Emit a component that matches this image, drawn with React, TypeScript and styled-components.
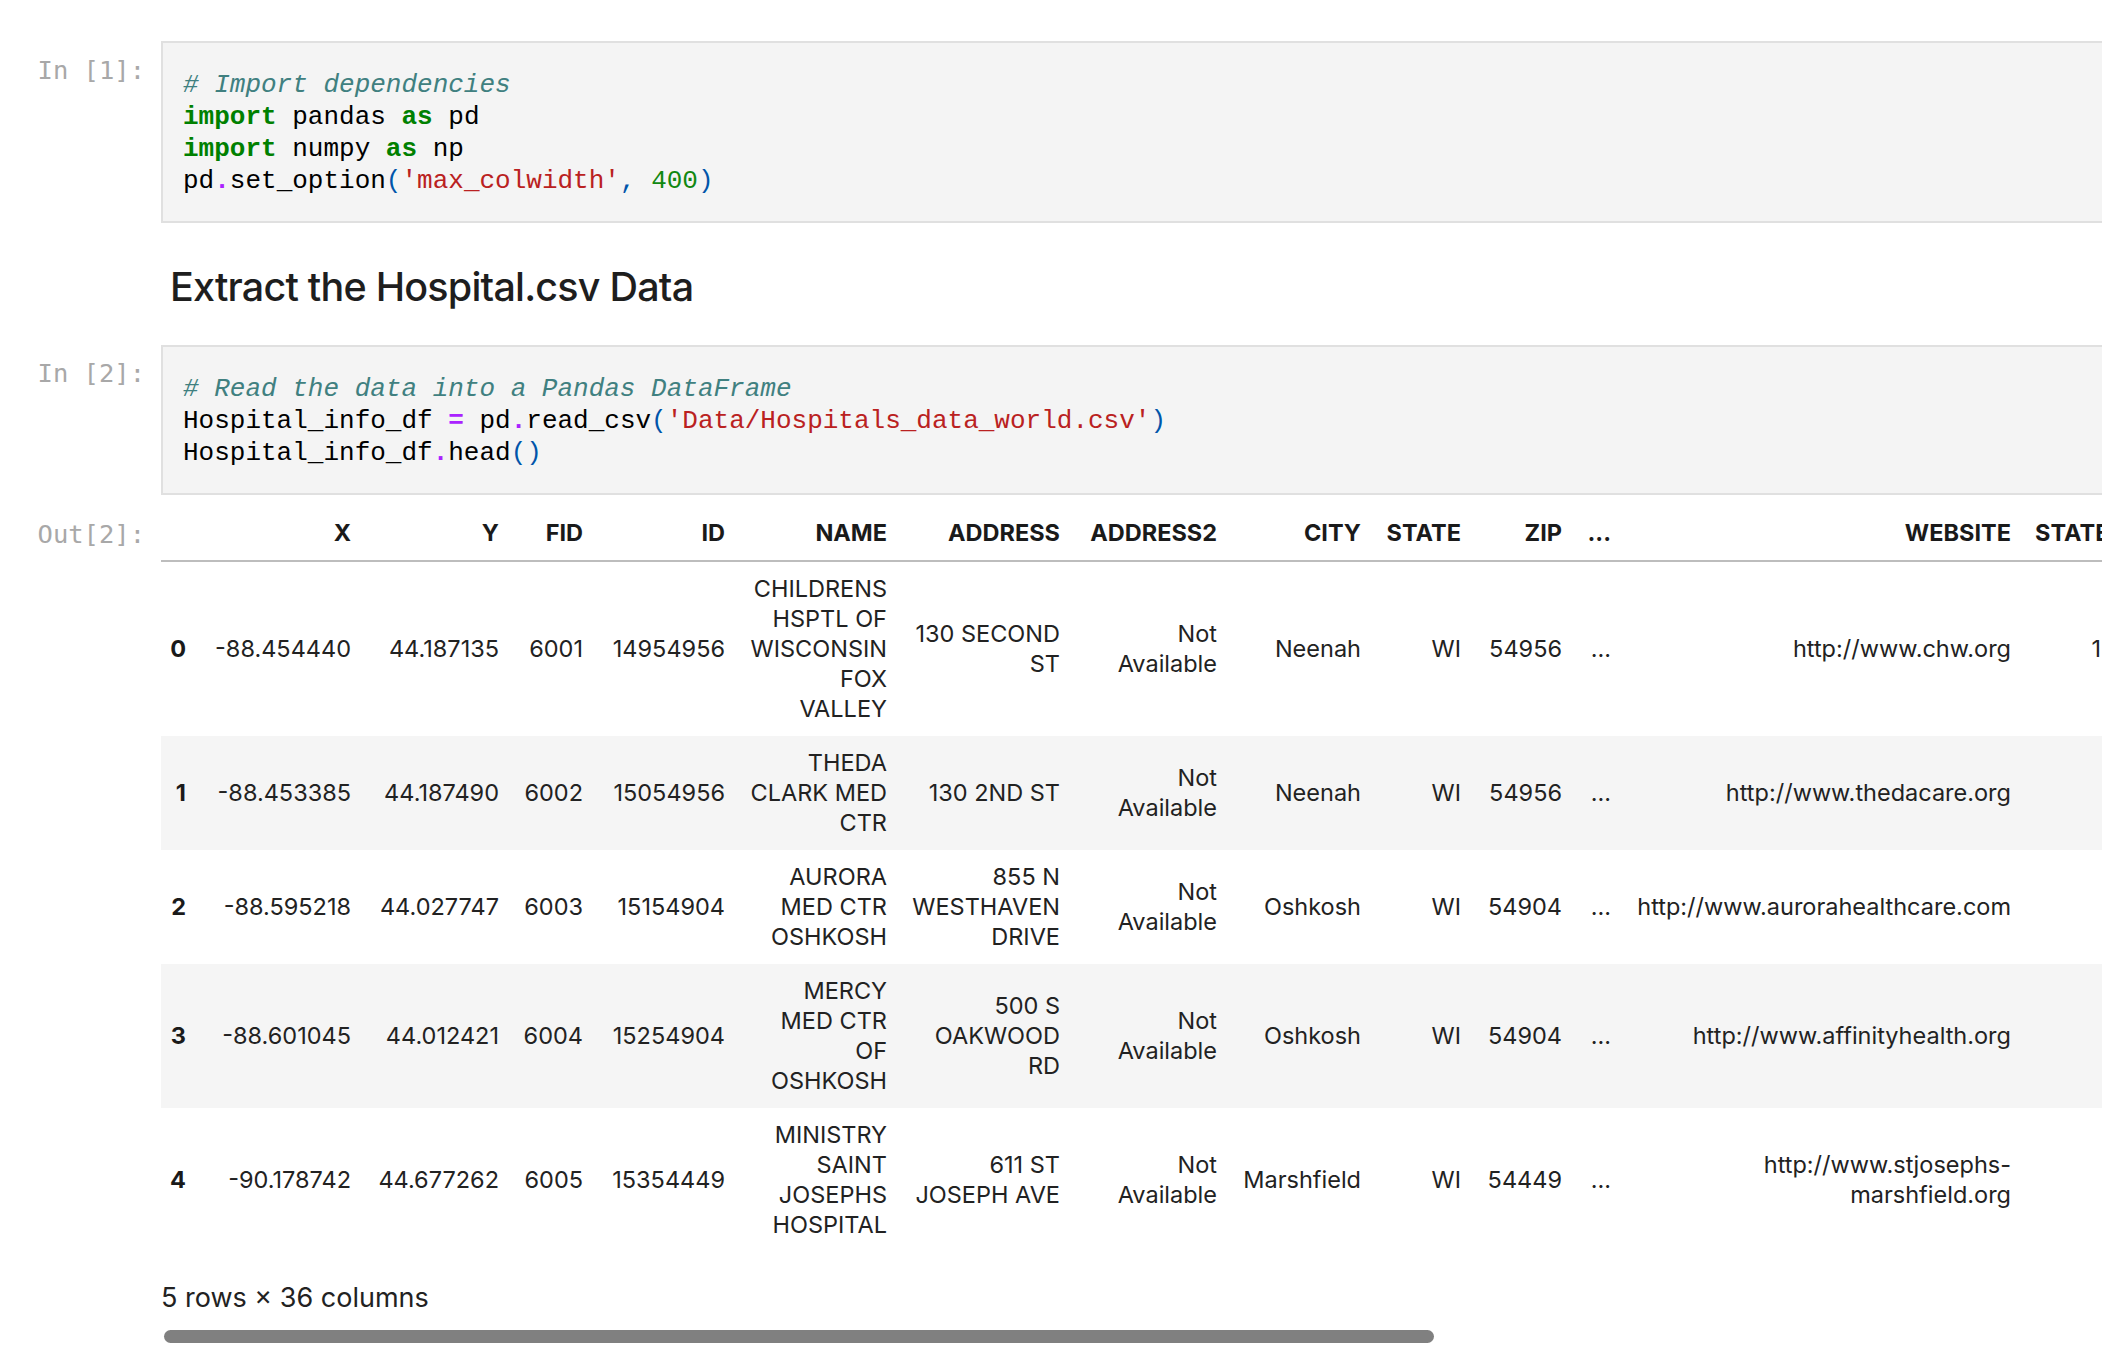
import React from "react";
import styled, { createGlobalStyle } from "styled-components";

const GlobalStyle = createGlobalStyle`
  html, body {
    margin: 0;
    padding: 0;
    background: #ffffff;
    overflow: hidden;
  }
  body {
    font-family: Inter, "Noto Sans", "Liberation Sans", sans-serif;
    color: #212121;
  }
`;

const Notebook = styled.div`
  width: 2300px;
  padding-top: 41px;
  display: flex;
  flex-direction: column;
`;

const Cell = styled.div<{ $gap?: number }>`
  display: flex;
  align-items: flex-start;
  margin-top: ${(p) => p.$gap ?? 0}px;
`;

const Prompt = styled.div<{ $top?: number }>`
  flex: 0 0 161px;
  box-sizing: border-box;
  padding-right: 16px;
  padding-top: ${(p) => p.$top ?? 13}px;
  text-align: right;
  font-family: "DejaVu Sans Mono", "Liberation Mono", monospace;
  font-size: 25.5px;
  line-height: 32px;
  color: #a8a8a8;
  white-space: pre;
`;

const InputArea = styled.div`
  flex: 1;
  min-width: 0;
  background: #f4f4f4;
  border: 2px solid #e0e0e0;
  border-right: none;
  padding: 26px 20px 24px 20px;
  font-family: "Liberation Mono", "DejaVu Sans Mono", monospace;
  font-size: 26px;
  line-height: 32px;
  color: #000;
`;

const CodeLine = styled.div`
  white-space: pre;
`;

type TokKind = "comment" | "kw" | "str" | "num" | "op" | "br" | "plain";

const tokColors: Record<TokKind, string> = {
  comment: "#408080",
  kw: "#008000",
  str: "#ba2121",
  num: "#118811",
  op: "#aa22ff",
  br: "#0055aa",
  plain: "#000000",
};

const Tok = styled.span<{ $k: TokKind }>`
  color: ${(p) => tokColors[p.$k]};
  font-style: ${(p) => (p.$k === "comment" ? "italic" : "normal")};
  font-weight: ${(p) => (p.$k === "kw" || p.$k === "op" ? 700 : 400)};
`;

const Markdown = styled.div`
  flex: 1;
  padding-left: 9px;
`;

const Heading = styled.h2`
  margin: 0;
  font-family: Inter, "Noto Sans", sans-serif;
  font-weight: 500;
  font-size: 39.5px;
  line-height: 48px;
  letter-spacing: -0.8px;
  color: #1e1e1e;
`;

const OutputArea = styled.div`
  flex: 1;
  min-width: 0;
  overflow: hidden;
  display: flex;
  flex-direction: column;
`;

const Table = styled.table`
  border-collapse: collapse;
  border-spacing: 0;
  table-layout: fixed;
  width: 2022px;
  font-family: Inter, "Noto Sans", "Liberation Sans", sans-serif;
  font-size: 23.5px;
  line-height: 30px;
  color: #222;
`;

const HeadRow = styled.tr`
  border-bottom: 2px solid #bdbdbd;
`;

const Th = styled.th`
  text-align: right;
  vertical-align: middle;
  padding: 12px 12px;
  font-weight: 700;
  white-space: nowrap;
  overflow: hidden;
  color: #1a1a1a;
`;

const BodyRow = styled.tr<{ $striped: boolean }>`
  background: ${(p) => (p.$striped ? "#f5f5f5" : "#ffffff")};
`;

const Td = styled.td`
  text-align: right;
  vertical-align: middle;
  padding: 12px 12px;
  white-space: nowrap;
  overflow: hidden;
`;

const IndexTh = styled(Th)`
  padding-left: 0;
`;

const Summary = styled.p`
  margin: 30px 0 0 0;
  font-size: 27px;
  line-height: 32px;
  color: #222;
`;

const ScrollTrack = styled.div`
  margin-top: 16px;
  padding-left: 3px;
  height: 13px;
`;

const ScrollThumb = styled.div`
  width: 1270px;
  height: 13px;
  border-radius: 7px;
  background: #808080;
`;

type Tk = [TokKind, string];

const cell1: Tk[][] = [
  [["comment", "# Import dependencies"]],
  [["kw", "import"], ["plain", " pandas "], ["kw", "as"], ["plain", " pd"]],
  [["kw", "import"], ["plain", " numpy "], ["kw", "as"], ["plain", " np"]],
  [
    ["plain", "pd"],
    ["op", "."],
    ["plain", "set_option"],
    ["br", "("],
    ["str", "'max_colwidth'"],
    ["br", ","],
    ["plain", " "],
    ["num", "400"],
    ["br", ")"],
  ],
];

const cell2: Tk[][] = [
  [["comment", "# Read the data into a Pandas DataFrame"]],
  [
    ["plain", "Hospital_info_df "],
    ["op", "="],
    ["plain", " pd"],
    ["op", "."],
    ["plain", "read_csv"],
    ["br", "("],
    ["str", "'Data/Hospitals_data_world.csv'"],
    ["br", ")"],
  ],
  [["plain", "Hospital_info_df"], ["op", "."], ["plain", "head"], ["br", "()"]],
];

const colWidths = [37, 165, 148, 84, 142, 162, 173, 157, 144, 100, 101, 49, 400, 134, 160];
const headers = ["", "X", "Y", "FID", "ID", "NAME", "ADDRESS", "ADDRESS2", "CITY", "STATE", "ZIP", "...", "WEBSITE", "STATE_ID", "ALT_NAME"];

type CellVal = string | string[];

const rows: CellVal[][] = [
  ["-88.454440", "44.187135", "6001", "14954956", ["CHILDRENS", "HSPTL OF", "WISCONSIN", "FOX", "VALLEY"], ["130 SECOND", "ST"], ["Not", "Available"], "Neenah", "WI", "54956", "...", "http://www.chw.org", "1500", "NOT AVAILABLE"],
  ["-88.453385", "44.187490", "6002", "15054956", ["THEDA", "CLARK MED", "CTR"], "130 2ND ST", ["Not", "Available"], "Neenah", "WI", "54956", "...", "http://www.thedacare.org", "55", "NOT AVAILABLE"],
  ["-88.595218", "44.027747", "6003", "15154904", ["AURORA", "MED CTR", "OSHKOSH"], ["855 N", "WESTHAVEN", "DRIVE"], ["Not", "Available"], "Oshkosh", "WI", "54904", "...", "http://www.aurorahealthcare.com", "55", "NOT AVAILABLE"],
  ["-88.601045", "44.012421", "6004", "15254904", ["MERCY", "MED CTR", "OF", "OSHKOSH"], ["500 S", "OAKWOOD", "RD"], ["Not", "Available"], "Oshkosh", "WI", "54904", "...", "http://www.affinityhealth.org", "55", "NOT AVAILABLE"],
  ["-90.178742", "44.677262", "6005", "15354449", ["MINISTRY", "SAINT", "JOSEPHS", "HOSPITAL"], ["611 ST", "JOSEPH AVE"], ["Not", "Available"], "Marshfield", "WI", "54449", "...", ["http://www.stjosephs-", "marshfield.org"], "55", "NOT AVAILABLE"],
];

const renderVal = (v: CellVal) =>
  Array.isArray(v)
    ? v.map((line, i) => (
        <React.Fragment key={i}>
          {i > 0 && <br />}
          {line}
        </React.Fragment>
      ))
    : v;

const Code = ({ lines }: { lines: Tk[][] }) => (
  <InputArea>
    {lines.map((line, i) => (
      <CodeLine key={i}>
        {line.map(([k, t], j) => (
          <Tok key={j} $k={k}>
            {t}
          </Tok>
        ))}
      </CodeLine>
    ))}
  </InputArea>
);

export default function App() {
  return (
    <>
      <GlobalStyle />
      <Notebook>
        <Cell>
          <Prompt>In [1]:</Prompt>
          <Code lines={cell1} />
        </Cell>

        <Cell $gap={40}>
          <Prompt $top={0} />
          <Markdown>
            <Heading>Extract the Hospital.csv Data</Heading>
          </Markdown>
        </Cell>

        <Cell $gap={34}>
          <Prompt $top={12}>In [2]:</Prompt>
          <Code lines={cell2} />
        </Cell>

        <Cell $gap={11}>
          <Prompt $top={12}>Out[2]:</Prompt>
          <OutputArea>
            <Table>
              <colgroup>
                {colWidths.map((w, i) => (
                  <col key={i} style={{ width: w }} />
                ))}
              </colgroup>
              <thead>
                <HeadRow>
                  {headers.map((h, i) => (
                    <Th key={i}>{h}</Th>
                  ))}
                </HeadRow>
              </thead>
              <tbody>
                {rows.map((r, i) => (
                  <BodyRow key={i} $striped={i % 2 === 1}>
                    <IndexTh>{i}</IndexTh>
                    {r.map((v, j) => (
                      <Td key={j}>{renderVal(v)}</Td>
                    ))}
                  </BodyRow>
                ))}
              </tbody>
            </Table>
            <Summary>5 rows × 36 columns</Summary>
            <ScrollTrack>
              <ScrollThumb />
            </ScrollTrack>
          </OutputArea>
        </Cell>
      </Notebook>
    </>
  );
}
